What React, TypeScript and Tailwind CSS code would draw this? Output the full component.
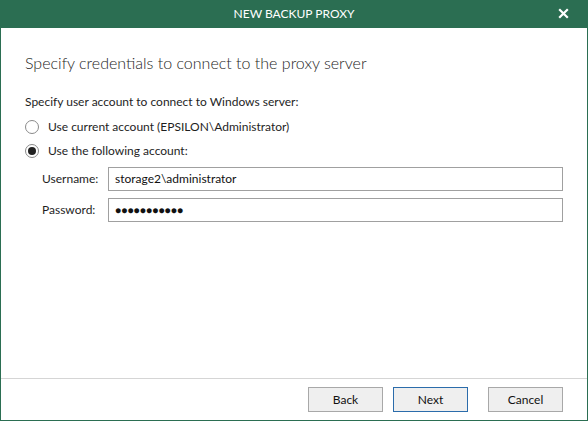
import React from "react";

const font = { fontFamily: 'Lato, "Noto Sans", "Liberation Sans", sans-serif' };

const Radio: React.FC<{ checked?: boolean; label: string }> = ({ checked, label }) => (
    <label className="flex items-center h-[24px]">
        <span className="w-[14px] h-[14px] rounded-full border border-[#8a8a8a] bg-white flex items-center justify-center">
            {checked ? <span className="w-[8px] h-[8px] rounded-full bg-[#222]" /> : null}
        </span>
        <span className="ml-[9px] text-[12px] text-[#1e1e1e]">{label}</span>
    </label>
);

const Field: React.FC<{ label: string; value: string; password?: boolean }> = ({ label, value, password }) => (
    <div className="flex items-center h-[24px]">
        <span className="w-[66px] text-[12px] text-[#1e1e1e]">{label}</span>
        <div className="flex-1 h-[24px] border border-[#a0a0a0] bg-white flex items-center px-[6px] text-[12px] text-[#111]">
            {password ? <span className="tracking-[0.2px] text-[10px]">●●●●●●●●●●●</span> : value}
        </div>
    </div>
);

const App: React.FC = () => {
    return (
        <div className="w-[588px] h-[421px] flex flex-col bg-white" style={font}>
            <div className="h-[28px] bg-[#2b6e52] flex items-center justify-center relative shrink-0">
                <span className="text-white text-[12px]">NEW BACKUP PROXY</span>
                <svg className="absolute right-[19px] top-[8px]" width="11" height="11" viewBox="0 0 11 11">
                    <path d="M1.2 1.2 L9.8 9.8 M9.8 1.2 L1.2 9.8" stroke="white" strokeWidth="2.2" />
                </svg>
            </div>
            <div className="flex-1 flex flex-col border-x border-b border-[#2b6e52]">
                <div className="flex-1 pl-[24px] pr-[24px] pt-[24px]">
                    <h1 className="text-[16px] font-light text-[#1e1e1e] leading-[22px]">
                        Specify credentials to connect to the proxy server
                    </h1>
                    <p className="mt-[20px] text-[12px] text-[#1e1e1e] leading-[16px]">
                        Specify user account to connect to Windows server:
                    </p>
                    <div className="mt-[5px]">
                        <Radio label="Use current account (EPSILON\Administrator)" />
                        <Radio checked label="Use the following account:" />
                    </div>
                    <div className="ml-[17px] mt-[4px] flex flex-col gap-[7px]">
                        <Field label="Username:" value="storage2\administrator" />
                        <Field label="Password:" value="" password />
                    </div>
                </div>
                <div className="h-[42px] border-t border-[#d5d5d5] flex items-start justify-end pt-[8px] pr-[24px]">
                    <button className="w-[75px] h-[25px] border border-[#a8a8a8] bg-[#efefef] text-[12px] text-[#111]">Back</button>
                    <button className="ml-[10px] w-[75px] h-[25px] border border-[#2b6cab] bg-[#efefef] text-[12px] text-[#111]">Next</button>
                    <button className="ml-[20px] w-[75px] h-[25px] border border-[#a8a8a8] bg-[#efefef] text-[12px] text-[#111]">Cancel</button>
                </div>
            </div>
        </div>
    );
};

export default App;
